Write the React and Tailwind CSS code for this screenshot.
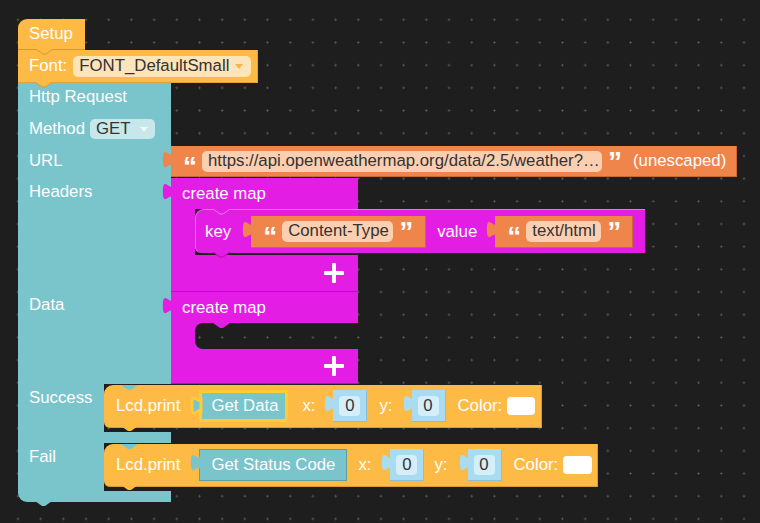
import React from 'react';

const YEL = '#fdbb45';
const TEAL = '#7ac4cb';
const ORG = '#ef854a';
const MAG = '#e41de4';
const NUM = '#a9dcf1';

const canvas =
  'bg-[#1e1e1e] bg-[radial-gradient(circle,#5a5a5a_0.9px,transparent_1.2px)] bg-[size:22.7px_22.7px] bg-[position:6.65px_8.45px] bg-fixed';

// output connector (puzzle tab) on the left edge of a value block
function Tab({ color, className = 'left-[-9px] top-[5px]' }) {
  return (
    <svg className={`absolute ${className}`} width="10" height="18" viewBox="0 0 10 18">
      <path d="M10 0 c0 11.45 -9.16 -9.16 -9.16 8.59 s9.16 -2.86 9.16 8.59 Z" fill={color} />
    </svg>
  );
}

function Notch({ fill = 'none', stroke = 'none', className }) {
  return (
    <svg className={`absolute ${className}`} width="17" height="6" viewBox="0 0 17 6">
      <path d="M0 0 L7 5 L10 5 L17 0" fill={fill} stroke={stroke} />
    </svg>
  );
}

function Arrow({ color }) {
  return (
    <svg width="8" height="5" viewBox="0 0 8 5">
      <path d="M0 0 L8 0 L4 5 Z" fill={color} />
    </svg>
  );
}

function Plus() {
  return (
    <svg width="22" height="22" viewBox="0 0 22 22">
      <rect x="9" y="1" width="4" height="20" rx="1" fill="white" />
      <rect x="1" y="9" width="20" height="4" rx="1" fill="white" />
    </svg>
  );
}

function Q({ c }) {
  return (
    <span className="inline-block w-[12px] h-[20px] shrink-0 overflow-visible text-[28px] leading-[32px] font-bold text-white">
      {c}
    </span>
  );
}

function Str({ text, width, field, className = '' }) {
  return (
    <div className={`relative h-[32px] ${width} shrink-0 bg-[#ef854a] border-b border-r border-[#c96a36] flex items-center pl-[12px] ${className}`}>
      <Tab color={ORG} />
      <Q c="“" />
      <span className={`ml-[7px] h-[21px] ${field} shrink-0 rounded-[5px] bg-[#fccfb1] pl-[6px] text-[#333] flex items-center whitespace-nowrap overflow-hidden`}>
        {text}
      </span>
      <span className="ml-[6px]">
        <Q c="”" />
      </span>
    </div>
  );
}

function Num({ className = '' }) {
  return (
    <div className={`relative h-[32px] w-[34px] shrink-0 bg-[#a9dcf1] border-b border-r border-[#8cbfd4] flex items-center pl-[6px] ${className}`}>
      <Tab color={NUM} />
      <div className="h-[20px] w-[21px] rounded-[4px] bg-[#d5eef9] text-[#333] flex items-center justify-center">0</div>
    </div>
  );
}

function CreateMapTop() {
  return (
    <div className="relative h-[31px] w-[187px] bg-[#e41de4] pl-[11px] flex items-center">
      create map
    </div>
  );
}

function Lcd({ width, children }) {
  return (
    <div className={`relative mt-[1px] h-[43px] ${width} self-start bg-[#fdbb45] rounded-tl-[9px] rounded-bl-[6px] border-b border-r border-[#d99b35] flex items-center pl-[12px]`}>
      <Notch fill={TEAL} className="left-[17px] top-0" />
      <Notch fill={YEL} className="left-[17px] bottom-[-5px] z-10" />
      <span>Lcd.print</span>
      {children}
    </div>
  );
}

export default function App() {
  return (
    <div className={`w-[760px] h-[523px] overflow-hidden ${canvas} [font-family:'Liberation_Sans',Arial,sans-serif] text-[16.8px] leading-[20px] text-white`}>
      <div className="flex flex-col items-start pl-[18px] pt-[19px]">
        {/* Setup */}
        <div className="h-[31px] w-[67px] rounded-tl-[9px] bg-[#fdbb45] border-b border-[#d89a35] pl-[11px] flex items-center">
          Setup
        </div>

        {/* Font */}
        <div className="relative h-[33px] w-[240px] bg-[#fdbb45] border-r border-b border-[#e0a33e] pl-[11px] flex items-center">
          <Notch fill={YEL} stroke="#d89a35" className="left-[18px] top-[-1px]" />
          <span>Font:</span>
          <span className="ml-[6px] h-[21px] w-[178px] rounded-[5px] bg-[#fde4b9] pl-[6px] pr-[8px] text-[#333] flex items-center justify-between">
            FONT_DefaultSmall
            <Arrow color="#f5b34a" />
          </span>
          <Notch fill={YEL} stroke="#d89a35" className="left-[17px] bottom-[-6px] z-10" />
        </div>

        {/* Http Request block */}
        <div className="flex h-[30px]">
          <div className="w-[153px] bg-[#7ac4cb] pl-[11px] pt-[4px]">Http Request</div>
        </div>

        <div className="flex h-[32px]">
          <div className="w-[153px] bg-[#7ac4cb] pl-[11px] flex items-center">
            <span>Method</span>
            <span className="ml-[5px] h-[20px] w-[65px] rounded-[5px] bg-[#c7e7eb] pl-[6px] pr-[7px] text-[#333] flex items-center justify-between">
              GET
              <Arrow color="#eef8f9" />
            </span>
          </div>
        </div>

        <div className="flex h-[33px]">
          <div className="w-[153px] bg-[#7ac4cb] pl-[11px] pb-[2px] flex items-center">URL</div>
          <div className="mt-[1px] flex items-start">
            <div className="relative h-[31px] w-[566px] bg-[#ef854a] border-b border-r border-[#c96a36] flex items-center pl-[12px]">
              <Tab color={ORG} />
              <Q c="“" />
              <span className="ml-[7px] h-[21px] w-[400px] rounded-[5px] bg-[#fccfb1] pl-[6px] text-[#333] flex items-center whitespace-nowrap overflow-hidden">
                https://api.openweathermap.org/data/2.5/weather?…
              </span>
              <span className="ml-[6px]">
                <Q c="”" />
              </span>
              <span className="ml-[13px]">(unescaped)</span>
            </div>
          </div>
        </div>

        {/* Headers */}
        <div className="flex h-[114px]">
          <div className="w-[153px] bg-[#7ac4cb] pl-[11px] pt-[4px]">Headers</div>
          <div className="relative flex flex-col items-start">
            <Tab color={MAG} />
            <CreateMapTop />
            <div className="flex h-[46px]">
              <div className="w-[24px] bg-[#e41de4]" />
              <div className="relative h-[44px] w-[450px] bg-[#e41de4] rounded-tl-[9px] rounded-bl-[6px] border-t border-l border-[#f070f0] flex items-center pl-[9px]">
                <Notch fill={MAG} stroke="#f070f0" className="left-[17px] top-[-1px]" />
                <Notch fill={MAG} stroke="#a912a9" className="left-[17px] bottom-[-5px] z-10" />
                <span>key</span>
                <Str text="Content-Type" width="w-[175px]" field="w-[111px]" className="ml-[20px]" />
                <span className="ml-[11px]">value</span>
                <Str text="text/html" width="w-[138px]" field="w-[75px]" className="ml-[18px]" />
              </div>
            </div>
            <div className="h-[37px] w-[187px] bg-[#e41de4] border-b border-[#b014b0] flex items-center justify-end pr-[13px]">
              <Plus />
            </div>
          </div>
        </div>

        {/* Data */}
        <div className="flex h-[92px]">
          <div className="w-[153px] bg-[#7ac4cb] pl-[11px] pt-[3px]">Data</div>
          <div className="relative flex flex-col items-start">
            <Tab color={MAG} />
            <CreateMapTop />
            <div className="relative flex h-[26px] w-[187px] bg-[#e41de4] pl-[24px]">
              <div className={`flex-1 rounded-l-[8px] ${canvas}`} />
              <Notch fill={MAG} className="left-[42px] top-0" />
            </div>
            <div className="h-[35px] w-[187px] bg-[#e41de4] border-b border-[#b014b0] flex items-center justify-end pr-[13px]">
              <Plus />
            </div>
          </div>
        </div>

        {/* Success */}
        <div className="flex h-[48px]">
          <div className="w-[86px] bg-[#7ac4cb] pl-[11px] pt-[4px]">Success</div>
          <Lcd width="w-[438px]">
            <div className="relative ml-[19px] h-[32px] w-[89px] shrink-0 bg-[#7ac4cb] border-[3px] border-[#ffcc33] flex items-center pl-[9px]">
              <svg className="absolute left-[-13px] top-[2px]" width="14" height="22" viewBox="-2 -2 14 22">
                <path d="M10 0 c0 11.45 -9.16 -9.16 -9.16 8.59 s9.16 -2.86 9.16 8.59 Z" fill={TEAL} stroke="#ffcc33" strokeWidth="3" />
              </svg>
              Get Data
            </div>
            <span className="ml-[14px]">x:</span>
            <Num className="ml-[18px]" />
            <span className="ml-[12px]">y:</span>
            <Num className="ml-[19px]" />
            <span className="ml-[12px]">Color:</span>
            <span className="ml-[5px] h-[18px] w-[28px] rounded-[4px] bg-white" />
          </Lcd>
        </div>

        <div className="h-[11px] w-[153px] bg-[#7ac4cb]" />

        {/* Fail */}
        <div className="flex h-[48px]">
          <div className="w-[86px] bg-[#7ac4cb] pl-[11px] pt-[4px]">Fail</div>
          <Lcd width="w-[494px]">
            <div className="relative ml-[19px] h-[32px] w-[148px] shrink-0 bg-[#7ac4cb] border border-[#5f9ea6] flex items-center pl-[11px]">
              <Tab color={TEAL} className="left-[-10px] top-[4px]" />
              Get Status Code
            </div>
            <span className="ml-[11px]">x:</span>
            <Num className="ml-[19px]" />
            <span className="ml-[10px]">y:</span>
            <Num className="ml-[20px]" />
            <span className="ml-[12px]">Color:</span>
            <span className="ml-[5px] h-[18px] w-[29px] rounded-[4px] bg-white" />
          </Lcd>
        </div>

        <div className="relative h-[11px] w-[153px] bg-[#7ac4cb] rounded-bl-[9px]">
          <Notch fill={TEAL} className="left-[17px] bottom-[-5px]" />
        </div>
      </div>
    </div>
  );
}
